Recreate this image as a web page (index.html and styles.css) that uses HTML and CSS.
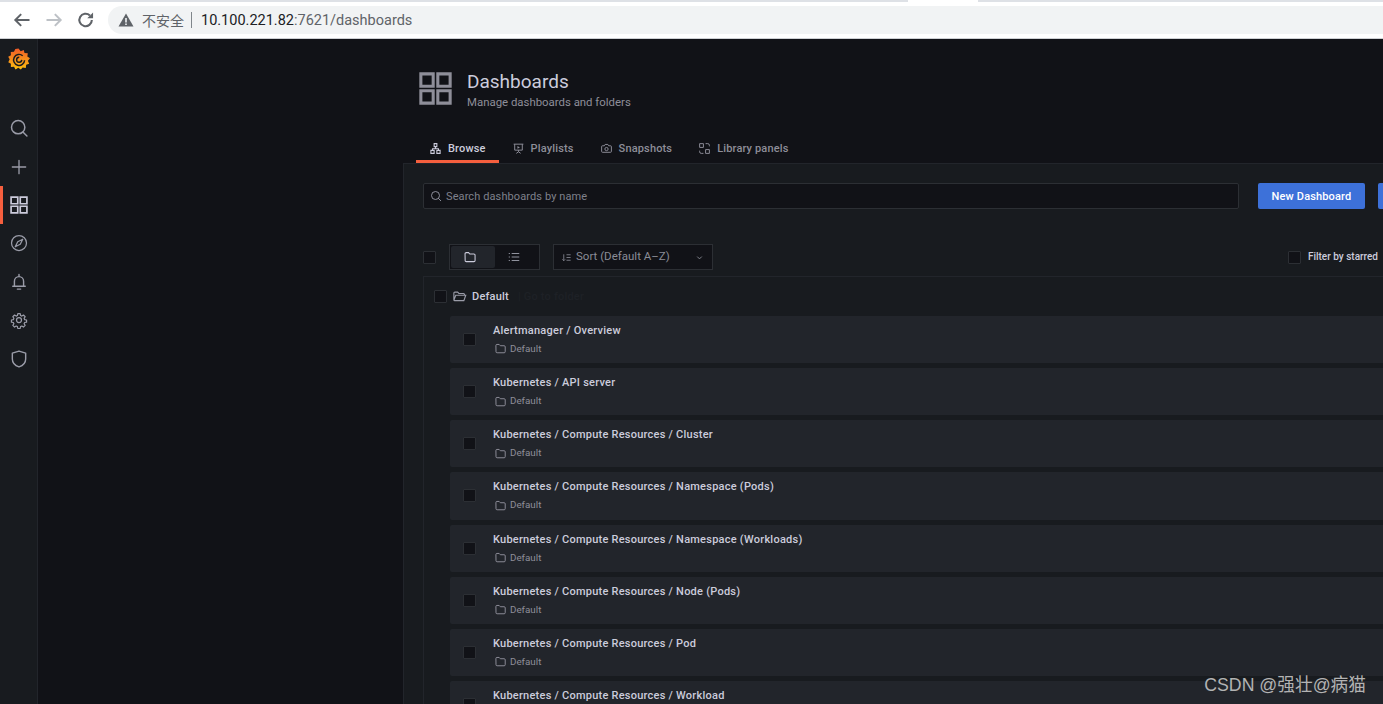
FILE: index.html
```html
<!DOCTYPE html>
<html lang="en">
<head>
  <meta charset="UTF-8" />
  <title>Dashboards - Grafana</title>
  <link rel="stylesheet" href="styles.css">
</head>
<body>

<svg class="defs" width="0" height="0">
  <defs>
    <symbol id="i-grid" viewBox="0 0 24 24"><path d="M2.500 2.500h8v8h-8zM13.500 2.500h8v8h-8zM2.500 13.500h8v8h-8zM13.500 13.500h8v8h-8z" fill="none" stroke="currentColor" stroke-width="2"/></symbol>
    <symbol id="i-folder" viewBox="0 0 24 24"><path d="M3.500 6.500a2 2 0 0 1 2-2h4l2.200 2.400h7a2 2 0 0 1 2 2v9a2 2 0 0 1-2 2h-13a2 2 0 0 1-2-2z" fill="none" stroke="currentColor" stroke-width="1.800"/></symbol>
    <symbol id="i-search" viewBox="0 0 24 24"><circle cx="11" cy="11" r="8" fill="none" stroke="currentColor" stroke-width="1.800"/><path d="M17 17l4.500 4.500" stroke="currentColor" stroke-width="1.800" stroke-linecap="round"/></symbol>
  </defs>
</svg>

<div class="tab-strip"><span class="tab-strip-gap"></span></div>
<div class="toolbar">
  <svg class="tb-icon" viewBox="0 0 24 24"><path d="M21 12H4M11 5l-7 7 7 7" fill="none" stroke="#5f6368" stroke-width="2.400"/></svg>
  <svg class="tb-icon" viewBox="0 0 24 24"><path d="M3 12h17M13 5l7 7-7 7" fill="none" stroke="#bdc1c6" stroke-width="2.400"/></svg>
  <svg class="tb-icon" viewBox="0 0 24 24"><path d="M19 12a7.500 7.500 0 1 1-2.300-5.400" fill="none" stroke="#5f6368" stroke-width="2.500"/><path d="M20.500 3v7h-7z" fill="#5f6368"/></svg>
  <div class="omnibox">
    <svg class="warn" viewBox="0 0 16 16"><path d="M8 1.500L15.500 14.500H.5z" fill="#5f6368"/><path d="M7.200 6h1.600v4.600H7.200zM7.200 11.400h1.600V13H7.200z" fill="#f1f3f4"/></svg>
    <span class="insecure">不安全</span>
    <span class="omni-sep"></span>
    <span class="url"><b>10.100.221.82</b>:7621/dashboards</span>
  </div>
</div>

<div class="app">
  <nav class="sidebar">
    <svg class="logo" viewBox="0 0 24 24">
      <defs>
        <linearGradient id="logo-grad" x1="0" y1="1" x2="0" y2="0">
          <stop offset="0" stop-color="#fcc00f"/>
          <stop offset="1" stop-color="#f05a28"/>
        </linearGradient>
      </defs>
      <path d="M11.500.5l2.300 3 3.400-1.400.8 3.400 3.600.2-.5 3.600 2.900 2-2.300 2.700 1.400 3.200-3.300 1-.4 3.500-3.400-.5L14 23.500l-2.800-2-3 1.900-1.600-3-3.500.2.100-3.500L.3 15.500l1.500-3.200L.2 9.500l3-1.700-.2-3.500 3.500-.2L8 1z" fill="url(#logo-grad)"/>
      <path d="M16 8.400a6 6 0 1 0 2.100 4.900M12.300 10a2.800 2.800 0 1 0 2.700 3" fill="none" stroke="#181b1f" stroke-width="1.600"/>
    </svg>
    <a class="nav-item"><svg viewBox="0 0 24 24"><use href="#i-search"/></svg></a>
    <a class="nav-item"><svg viewBox="0 0 24 24"><path d="M12 4v16M4 12h16" stroke="currentColor" stroke-width="1.600" stroke-linecap="round"/></svg></a>
    <a class="nav-item active"><svg viewBox="0 0 24 24"><use href="#i-grid"/></svg></a>
    <a class="nav-item"><svg viewBox="0 0 24 24"><circle cx="12" cy="12" r="9" fill="none" stroke="currentColor" stroke-width="1.500"/><path d="M16.500 7.500l-3 6-6 3 3-6z" fill="none" stroke="currentColor" stroke-width="1.500" stroke-linejoin="round"/></svg></a>
    <a class="nav-item"><svg viewBox="0 0 24 24"><path d="M6.500 16.500V11a5.500 5.500 0 0 1 11 0v5.500M4.500 17h15M12 3v2.500M10 20.500h4" fill="none" stroke="currentColor" stroke-width="1.700" stroke-linecap="round"/></svg></a>
    <a class="nav-item"><svg viewBox="0 0 24 24"><circle cx="12" cy="12" r="3" fill="none" stroke="currentColor" stroke-width="1.500"/><path d="M10.300 3h3.400l.5 2.700 1.800.8 2.300-1.500 2.400 2.400-1.500 2.300.8 1.800 2.700.5v3l-2.700.5-.8 1.800 1.500 2.300-2.400 2.400-2.300-1.500-1.800.8-.5 2.700h-3.400l-.5-2.700-1.800-.8-2.300 1.500-2.400-2.400 1.500-2.300-.8-1.800-2.700-.5v-3l2.700-.5.8-1.800-1.500-2.300 2.400-2.400 2.300 1.500 1.800-.8z" transform="translate(1.800 1.800) scale(.85)" fill="none" stroke="currentColor" stroke-width="1.700" stroke-linejoin="round"/></svg></a>
    <a class="nav-item"><svg viewBox="0 0 24 24"><path d="M12 2.500l8 2.500v7c0 5-3.500 8-8 9.500-4.500-1.500-8-4.500-8-9.500V5z" fill="none" stroke="currentColor" stroke-width="1.700" stroke-linejoin="round"/></svg></a>
  </nav>

  <main class="main">
    <header class="page-header">
      <div class="page-title">
        <svg class="page-icon"><use href="#i-grid"/></svg>
        <div>
          <h1>Dashboards</h1>
          <p>Manage dashboards and folders</p>
        </div>
      </div>
      <ul class="tabs">
        <li class="tab active">
          <svg viewBox="0 0 24 24"><path d="M12 8.500v4M12 12.500H6.500v3M12 12.500h5.500v3" fill="none" stroke="currentColor" stroke-width="2"/><path d="M9.500 3h5v5.500h-5zM3.500 15.500h6V21h-6zM14.500 15.500h6V21h-6z" fill="none" stroke="currentColor" stroke-width="2"/></svg>
          Browse
        </li>
        <li class="tab">
          <svg viewBox="0 0 24 24"><path d="M3 4h18M5 4v11h14V4M12 15v3M8 21l4-3 4 3" fill="none" stroke="currentColor" stroke-width="1.800"/><path d="M10 7.500l4.500 2.500-4.500 2.500z" fill="currentColor"/></svg>
          Playlists
        </li>
        <li class="tab">
          <svg viewBox="0 0 24 24"><path d="M3 8.500a1.500 1.500 0 0 1 1.500-1.500H8l1.500-2.500h5L16 7h3.500A1.500 1.500 0 0 1 21 8.500v9a1.500 1.500 0 0 1-1.500 1.500h-15A1.500 1.500 0 0 1 3 17.500z" fill="none" stroke="currentColor" stroke-width="1.800"/><circle cx="12" cy="13" r="3" fill="none" stroke="currentColor" stroke-width="1.800"/></svg>
          Snapshots
        </li>
        <li class="tab">
          <svg viewBox="0 0 24 24"><path d="M3 3h7v7H3zM14 14h7v7h-7zM14 3h4a3 3 0 0 1 3 3v2M10 21H6a3 3 0 0 1-3-3v-2" fill="none" stroke="currentColor" stroke-width="1.800"/></svg>
          Library panels
        </li>
      </ul>
    </header>

    <section class="panel">
      <div class="actions">
        <div class="search">
          <svg viewBox="0 0 24 24"><use href="#i-search"/></svg>
          <span>Search dashboards by name</span>
        </div>
        <button class="btn">New Dashboard</button>
        <button class="btn">New Folder</button>
      </div>

      <div class="filters">
        <span class="check"></span>
        <div class="layout-toggle">
          <span class="toggle-btn on"><svg viewBox="0 0 24 24"><use href="#i-folder"/></svg></span>
          <span class="toggle-btn"><svg viewBox="0 0 24 24"><path d="M8 6h13M8 12h13M8 18h13M3 6h2M3 12h2M3 18h2" stroke="currentColor" stroke-width="1.600"/></svg></span>
        </div>
        <div class="sort">
          <svg viewBox="0 0 24 24"><path d="M6 5v14M3 16l3 3 3-3M12 6h9M12 12h9M12 18h9" fill="none" stroke="currentColor" stroke-width="1.800"/></svg>
          <span>Sort (Default A–Z)</span>
          <svg class="chevron" viewBox="0 0 24 24"><path d="M7 10l5 5 5-5" fill="none" stroke="currentColor" stroke-width="2"/></svg>
        </div>
        <label class="starred"><span class="check"></span><span class="starred-text">Filter by starred</span></label>
      </div>

      <div class="results">
        <div class="folder-head">
          <span class="check"></span>
          <svg viewBox="0 0 24 24"><path d="M3 18V6.500a1.500 1.500 0 0 1 1.500-1.500H9l2 2.200h7.500A1.500 1.500 0 0 1 20 8.700V10M3 18l3-8h16l-3 8.500H4.500A1.500 1.500 0 0 1 3 18z" fill="none" stroke="currentColor" stroke-width="1.800"/></svg>
          <span class="folder-name">Default</span>
          <span class="folder-ghost">| Go to folder</span>
        </div>

        <div class="row">
          <span class="check"></span>
          <div class="row-body"><div class="row-title">Alertmanager / Overview</div><div class="row-sub"><svg viewBox="0 0 24 24"><use href="#i-folder"/></svg>Default</div></div>
        </div>
        <div class="row">
          <span class="check"></span>
          <div class="row-body"><div class="row-title">Kubernetes / API server</div><div class="row-sub"><svg viewBox="0 0 24 24"><use href="#i-folder"/></svg>Default</div></div>
        </div>
        <div class="row">
          <span class="check"></span>
          <div class="row-body"><div class="row-title">Kubernetes / Compute Resources / Cluster</div><div class="row-sub"><svg viewBox="0 0 24 24"><use href="#i-folder"/></svg>Default</div></div>
        </div>
        <div class="row">
          <span class="check"></span>
          <div class="row-body"><div class="row-title">Kubernetes / Compute Resources / Namespace (Pods)</div><div class="row-sub"><svg viewBox="0 0 24 24"><use href="#i-folder"/></svg>Default</div></div>
        </div>
        <div class="row">
          <span class="check"></span>
          <div class="row-body"><div class="row-title">Kubernetes / Compute Resources / Namespace (Workloads)</div><div class="row-sub"><svg viewBox="0 0 24 24"><use href="#i-folder"/></svg>Default</div></div>
        </div>
        <div class="row">
          <span class="check"></span>
          <div class="row-body"><div class="row-title">Kubernetes / Compute Resources / Node (Pods)</div><div class="row-sub"><svg viewBox="0 0 24 24"><use href="#i-folder"/></svg>Default</div></div>
        </div>
        <div class="row">
          <span class="check"></span>
          <div class="row-body"><div class="row-title">Kubernetes / Compute Resources / Pod</div><div class="row-sub"><svg viewBox="0 0 24 24"><use href="#i-folder"/></svg>Default</div></div>
        </div>
        <div class="row">
          <span class="check"></span>
          <div class="row-body"><div class="row-title">Kubernetes / Compute Resources / Workload</div><div class="row-sub"><svg viewBox="0 0 24 24"><use href="#i-folder"/></svg>Default</div></div>
        </div>
      </div>
    </section>
  </main>
</div>

<div class="watermark">CSDN @强壮@病猫</div>

</body>
</html>
```

FILE: styles.css
```css
html, body {
  margin: 0;
  height: 100%;
  overflow: hidden;
  background: #111217;
}
body {
  font-family: Roboto, "Noto Sans CJK SC", sans-serif;
  font-size: 12px;
  color: #ccccdc;
  position: relative;
}
.defs {
  position: absolute;
}

/* browser chrome */
.tab-strip {
  height: 2px;
  background: #dee1e6;
  display: flex;
  justify-content: flex-end;
  padding-right: 405px;
}
.tab-strip-gap {
  width: 70px;
  background: #fff;
}
.toolbar {
  height: 36px;
  background: #fff;
  border-bottom: 1px solid #ced0d4;
  display: flex;
  align-items: center;
  padding-left: 12px;
}
.tb-icon {
  width: 20px;
  height: 20px;
  margin-right: 12px;
}
.omnibox {
  flex: 1;
  height: 28px;
  background: #f1f3f4;
  border-radius: 14px 0 0 14px;
  display: flex;
  align-items: center;
  padding-left: 10px;
}
.warn {
  width: 16px;
  height: 16px;
}
.insecure {
  margin-left: 8px;
  font-size: 14px;
  color: #5f6368;
}
.omni-sep {
  width: 1px;
  height: 16px;
  background: #80868b;
  margin: 0 9px 0 7px;
}
.url {
  font-size: 14.500px;
  color: #5f6368;
}
.url b {
  font-weight: 400;
  color: #202124;
}

/* grafana shell */
.app {
  display: flex;
  height: 665px;
}
.sidebar {
  width: 37px;
  flex: none;
  background: #181b1f;
  border-right: 1px solid #22252b;
  display: flex;
  flex-direction: column;
  align-items: center;
}
.logo {
  width: 22px;
  height: 22px;
  margin: 9px 0 39px;
}
.nav-item {
  align-self: stretch;
  height: 38.400px;
  display: flex;
  align-items: center;
  justify-content: center;
  color: #9a9ca8;
  box-sizing: border-box;
}
.nav-item svg {
  width: 20px;
  height: 20px;
}
.nav-item.active {
  color: #ccccdc;
  border-left: 3px solid #f55f3e;
  padding-right: 3px;
}
.main {
  flex: 1;
  min-width: 0;
  padding-left: 365px;
}

/* header */
.page-header {
  height: 124px;
  box-sizing: border-box;
  padding-top: 31px;
  display: flex;
  flex-direction: column;
}
.page-title {
  display: flex;
  padding-left: 14px;
  height: 71px;
}
.page-icon {
  width: 37px;
  height: 37px;
  color: #8e8e99;
  margin-right: 13px;
}
.page-title h1 {
  margin: 0;
  padding-top: 1px;
  font-size: 19px;
  font-weight: 400;
  line-height: 22px;
  color: #ccccdc;
}
.page-title p {
  margin: 1px 0 0;
  font-size: 11.400px;
  line-height: 16px;
  color: #8e8e99;
}
.tabs {
  list-style: none;
  margin: 0 0 0 13px;
  padding: 0;
  display: flex;
  height: 22px;
}
.tab {
  display: flex;
  align-items: flex-start;
  gap: 6px;
  padding: 0 13px;
  height: 22px;
  line-height: 16px;
  font-size: 11px;
  font-weight: 500;
  letter-spacing: .15px;
  color: #8e8e99;
  box-sizing: border-box;
}
.tab svg {
  width: 13px;
  height: 13px;
  margin-top: 1px;
}
.tab.active {
  color: #ccccdc;
  border-bottom: 3px solid #f55f3e;
}

/* panel */
.panel {
  width: 1100px;
  height: 600px;
  box-sizing: border-box;
  background: #181b1f;
  border: 1px solid #22252b;
  padding: 19px 0 0 19px;
}
.actions {
  display: flex;
  height: 26px;
}
.search {
  width: 816px;
  box-sizing: border-box;
  background: #111217;
  border: 1px solid #2c2f34;
  border-radius: 2px;
  display: flex;
  align-items: center;
  gap: 4px;
  padding-left: 6px;
  font-size: 11px;
  letter-spacing: .1px;
  color: #7f818c;
}
.search svg {
  width: 12px;
  height: 12px;
  color: #9a9ca8;
}
.btn {
  height: 26px;
  width: 107px;
  flex: none;
  margin-left: 19px;
  margin-right: -6px;
  padding: 0;
  border: 0;
  border-radius: 2px;
  background: #3d71d9;
  color: #fff;
  font-family: inherit;
  font-size: 11px;
  font-weight: 500;
  letter-spacing: .15px;
}
.btn + .btn {
  margin-left: 19px;
}
.filters {
  display: flex;
  align-items: center;
  height: 26px;
  margin-top: 35px;
  width: 955px;
}
.check {
  width: 13px;
  height: 13px;
  flex: none;
  box-sizing: border-box;
  background: #111217;
  border: 1px solid #2c2f34;
  border-radius: 1px;
}
.layout-toggle {
  margin-left: 13px;
  width: 91px;
  height: 26px;
  box-sizing: border-box;
  border: 1px solid #2c2f34;
  padding: 1px;
  display: flex;
  background: #111217;
}
.toggle-btn {
  flex: 1;
  display: flex;
  align-items: center;
  justify-content: center;
  padding-right: 6px;
  color: #9a9ca8;
}
.toggle-btn.on {
  flex: none;
  width: 38px;
  background: #22252b;
  color: #ccccdc;
  border-radius: 2px;
}
.toggle-btn svg {
  width: 14px;
  height: 14px;
}
.sort {
  margin-left: 13px;
  width: 160px;
  height: 26px;
  box-sizing: border-box;
  border: 1px solid #2c2f34;
  background: #111217;
  display: flex;
  align-items: center;
  padding-left: 7px;
  font-size: 11.500px;
  color: #8a8c96;
}
.sort span {
  margin-bottom: 2px;
}
.sort > svg {
  width: 11px;
  height: 11px;
  margin-right: 4px;
}
.sort .chevron {
  margin: 0 7px 0 auto;
  width: 11px;
  height: 11px;
}
.starred {
  margin-left: auto;
  display: flex;
  align-items: center;
  gap: 7px;
  font-size: 10px;
  font-weight: 500;
  color: #ccccdc;
}
.starred-text {
  margin-bottom: 1px;
}

/* search results */
.results {
  margin-top: 6px;
  border-top: 1px solid #22252b;
  border-left: 1px solid #22252b;
  height: 500px;
  padding-left: 26px;
}
.folder-head {
  display: flex;
  align-items: center;
  height: 39px;
  margin-left: -16px;
  font-size: 11px;
  font-weight: 500;
  letter-spacing: .2px;
  color: #ccccdc;
}
.folder-head svg {
  width: 15px;
  height: 15px;
  margin-left: 5px;
  margin-right: 5px;
  color: #9a9ca8;
}
.folder-ghost {
  margin-left: 9px;
  color: #1e2126;
}
.row {
  height: 47.150px;
  margin-bottom: 5px;
  background: #22252b;
  display: flex;
  align-items: center;
  padding-left: 13px;
  border-radius: 2px;
}
.row .check {
  margin-right: 17px;
}
.row-body {
  padding-top: .850px;
}
.row-title {
  font-size: 11px;
  font-weight: 500;
  line-height: 14px;
  letter-spacing: .24px;
  color: #ccccdc;
}
.row-sub {
  display: flex;
  align-items: center;
  gap: 3px;
  margin-top: 4px;
  margin-left: 1px;
  font-size: 9.800px;
  line-height: 14px;
  color: #8e8e99;
}
.row-sub svg {
  width: 13px;
  height: 13px;
}
.watermark {
  position: absolute;
  right: 17px;
  bottom: 8px;
  font-family: "Liberation Sans", "Noto Sans CJK SC", sans-serif;
  font-size: 17.700px;
  color: #b3b3b3;
}
```
